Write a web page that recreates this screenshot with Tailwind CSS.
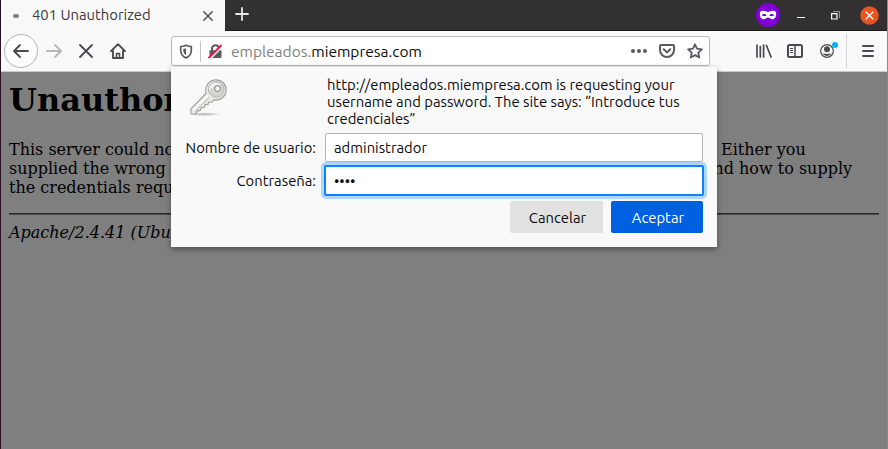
<!DOCTYPE html>
<html lang="es">
<head>
<meta charset="utf-8">
<title>401 Unauthorized</title>
<script src="https://cdn.jsdelivr.net/npm/@tailwindcss/browser@4"></script>
</head>
<body class="relative flex h-[449px] w-[888px] flex-col overflow-hidden border-l border-[#2c0f22] bg-[#7f7f7f] font-['Ubuntu','Noto_Sans',sans-serif] text-[14.8px] text-[#0c0c0d]">
  <!-- Tab strip -->
  <header class="flex h-[31px] w-[886px] shrink-0 bg-[#323031]">
    <div class="flex w-[224px] items-center bg-[#f9f9fa] pl-3">
      <span class="h-[4px] w-[6px] rounded-full bg-[#858585]"></span>
      <span class="ml-[13px] w-[119px] whitespace-nowrap text-[#38383d]">401 Unauthorized</span>
      <svg class="ml-[51px]" width="12" height="12" viewBox="0 0 12 12" fill="none" stroke="#555" stroke-width="1.6" stroke-linecap="round"><path d="M1.8 1.8l8.4 8.4M10.2 1.8L1.8 10.2"/></svg>
    </div>
    <div class="flex flex-1 items-center justify-between border-b border-[#1d1b1c] pl-[10px] pr-[8px]">
      <svg class="relative -top-px" width="14" height="14" viewBox="0 0 14 14" fill="none" stroke="#e6e6e6" stroke-width="1.8" stroke-linecap="round"><path d="M7 1v12M1 7h12"/></svg>
      <div class="flex items-center">
        <svg width="24" height="24" viewBox="0 0 24 24"><circle cx="12" cy="12" r="12" fill="#8000d7"/><path fill="#fff" fill-rule="evenodd" d="M7.500 7.800C9.800 7.800 10.500 9 12 9S14.200 7.800 16.500 7.800C19 7.600 20.200 8.500 20.200 10.800C20.200 14 18.800 16.300 16.500 16.300C14.200 16.300 13.500 14.600 12 14.600S9.800 16.300 7.500 16.300C5.200 16.300 3.800 14 3.800 10.800C3.800 8.500 5 7.600 7.500 7.800ZM8.300 10.900C7 10.900 6.200 11.600 5.900 12.200C6.600 12.900 7.500 13.100 8.500 13.100S10.400 12.900 10.600 12.500C10.400 11.500 9.600 10.900 8.300 10.900ZM15.700 10.900C14.400 10.900 13.600 11.500 13.400 12.500C13.600 12.900 14.500 13.100 15.500 13.100S17.400 12.900 18.100 12.200C17.800 11.600 17 10.900 15.700 10.900Z"/></svg>
        <svg class="ml-[17px]" width="8" height="14" viewBox="0 0 8 14"><path d="M0 9.500h8" stroke="#fff"/></svg>
        <svg class="ml-[26px]" width="9" height="9" viewBox="0 0 9 9" fill="none"><path d="M2 .5h6.500v6.500" stroke="#999"/><path d="M.6 2.600h5.400v5.400h-5.400z" stroke="#fff" stroke-width="1.200"/></svg>
        <svg class="ml-[20px]" width="19" height="19" viewBox="0 0 19 19"><circle cx="9.500" cy="9.500" r="9.300" fill="#e95420"/><path d="M5.800 5.800l7.400 7.400M13.200 5.800l-7.400 7.400" stroke="#fff" stroke-width="1.300"/></svg>
      </div>
    </div>
  </header>

  <!-- Navigation toolbar -->
  <nav class="flex h-[41px] w-[886px] shrink-0 items-center border-b border-[#ccc] bg-[#f9f9fa] pl-[3px]">
    <span class="flex size-[34px] items-center justify-center rounded-full border border-[#b4b4b5] bg-[#fdfdfd]">
      <svg width="18" height="16" viewBox="0 0 18 16" fill="none" stroke="#4a4a4e" stroke-width="1.800" stroke-linecap="round" stroke-linejoin="round"><path d="M16 8H2M8 2L2 8l6 6"/></svg>
    </span>
    <svg class="ml-[7px]" width="18" height="16" viewBox="0 0 18 16" fill="none" stroke="#b8b8b9" stroke-width="1.800" stroke-linecap="round" stroke-linejoin="round"><path d="M2 8h14M10 2l6 6-6 6"/></svg>
    <svg class="ml-[15px]" width="16" height="16" viewBox="0 0 16 16" fill="none" stroke="#4a4a4e" stroke-width="1.800" stroke-linecap="round"><path d="M2 2l12 12M14 2L2 14"/></svg>
    <svg class="ml-[16px]" width="16" height="16" viewBox="0 0 16 16" fill="none" stroke="#4a4a4e" stroke-width="1.900" stroke-linecap="round" stroke-linejoin="round"><path d="M1 8.200L8 1.200l7 7M3 8v7h10V8"/><path d="M6.500 15v-4.500h3V15" stroke-width="1.600"/></svg>

    <div class="ml-[45px] flex h-[30px] w-[539px] items-center rounded-[3px] border border-[#b9b9ba] bg-white pl-[7px] pr-[6px] shadow-[0_1px_2px_rgba(0,0,0,0.06)]">
      <svg width="14" height="15" viewBox="0 0 14 15"><path d="M7 1.200C5 2.200 3.300 2.500 1.700 2.500v3.700c0 3.600 1.800 6.300 5.300 7.700c3.500-1.400 5.300-4.100 5.300-7.700V2.500C10.700 2.500 9 2.200 7 1.200Z" fill="none" stroke="#5a5a5d" stroke-width="1.700" stroke-linejoin="round"/><path d="M7 4.200v7C5 10 4.300 8.300 4.300 6.200V4.800C5.300 4.800 6.200 4.600 7 4.200Z" fill="#5a5a5d"/></svg>
      <span class="ml-[7px] h-[21px] w-px bg-[#c4c4c5]"></span>
      <svg class="ml-[7px]" width="15" height="15" viewBox="0 0 15 15"><path d="M4 7V4.700a3.500 3.500 0 0 1 7 0V7" fill="none" stroke="#5a5a5d" stroke-width="2"/><rect x="1.500" y="6.300" width="12" height="7.700" rx="1" fill="#5a5a5d"/><path d="M1.600 15L14.600 2" stroke="#fff" stroke-width="2.200"/><path d="M.6 14L13.600 1" stroke="#ff0f45" stroke-width="1.900"/></svg>
      <span class="relative top-px ml-[8px] flex-1 whitespace-nowrap text-[15.5px] text-[#808080]">empleados.<span class="text-[#0c0c0d]">miempresa.com</span></span>
      <svg width="16" height="4" viewBox="0 0 16 4" fill="#5a5a5d"><circle cx="2" cy="2" r="2"/><circle cx="8" cy="2" r="2"/><circle cx="14" cy="2" r="2"/></svg>
      <svg class="ml-[12px]" width="16" height="14" viewBox="0 0 16 14" fill="none" stroke="#5a5a5d" stroke-width="2" stroke-linecap="round" stroke-linejoin="round"><path d="M2 1h12a1 1 0 0 1 1 1v4a7 7 0 0 1-14 0V2a1 1 0 0 1 1-1ZM4.700 5.200L8 8.400l3.300-3.200"/></svg>
      <svg class="ml-[12px]" width="16" height="16" viewBox="0 0 16 16" fill="none" stroke="#5a5a5d" stroke-width="1.800" stroke-linejoin="round"><path d="M8 1.300l2 4.400 4.900.6-3.600 3.300.9 4.900L8 12.100l-4.200 2.400.9-4.900L1.100 6.300 6 5.700Z"/></svg>
    </div>

    <svg class="ml-[46px]" width="16" height="14" viewBox="0 0 16 14" fill="none" stroke="#4a4a4e" stroke-width="1.700" stroke-linecap="round"><path d="M1 1v12M4.300 2.500V13M7.600 1v12M10.500 1.500L15 13"/></svg>
    <svg class="ml-[15px]" width="16" height="14" viewBox="0 0 16 14" fill="none" stroke="#4a4a4e"><rect x="1" y="1" width="14" height="12" rx="1.500" stroke-width="2"/><path d="M8 1v12" stroke-width="1.500"/><path d="M3 4.500h3M3 6.500h3M3 8.500h3"/></svg>
    <svg class="ml-[17px]" width="19" height="18" viewBox="0 0 19 18"><circle cx="7" cy="9" r="6.300" fill="none" stroke="#4a4a4e" stroke-width="1.200"/><circle cx="7" cy="7.200" r="3" fill="#4a4a4e"/><path d="M2.800 11.600c1.300-.3 2.500.3 4.200.3s2.900-.6 4.200-.3C10.200 13.200 8.700 14 7 14s-3.200-.8-4.200-2.400Z" fill="#4a4a4e"/><circle cx="15" cy="3" r="3" fill="#00b3f4"/></svg>
    <span class="ml-[7px] h-[34px] w-px bg-[#d7d7db]"></span>
    <svg class="ml-[15px]" width="12" height="12" viewBox="0 0 12 12" stroke="#4a4a4e" stroke-width="2" stroke-linecap="round"><path d="M1 1h10M1 6h10M1 11h10"/></svg>
  </nav>

  <!-- Dimmed page -->
  <main class="w-[886px] flex-1 pl-[8px] pr-[8px] font-['DejaVu_Serif',serif] text-[16px] leading-[19px] text-black">
    <h1 class="pt-[9px] text-[32px] font-bold leading-[38px]">Unauthorized</h1>
    <p class="mt-[21px]">This server could not verify that you are authorized to access the document requested. Either you supplied the wrong credentials (e.g., bad password), or your browser doesn't understand how to supply the credentials required.</p>
    <div class="mt-[16px] h-[2px] border-t border-b border-t-[#2a2a2a] border-b-[#4a4a4a]"></div>
    <address class="mt-[8px]">Apache/2.4.41 (Ubuntu) Server at empleados.miempresa.com Port 80</address>
  </main>
  <div class="absolute right-0 top-0 h-full w-px bg-[#8c8b8b]"></div>

  <!-- Authentication prompt -->
  <section class="absolute left-[170px] top-[67px] flex h-[180px] w-[546px] flex-col bg-[#f9f9fa] pl-[14px] pr-[14px] pt-[9px] shadow-[0_2px_6px_rgba(0,0,0,0.4)]">
    <div class="flex h-[57px]">
      <svg class="ml-[3px] mt-[2px]" width="42" height="40" viewBox="0 0 44 42">
        <defs><linearGradient id="metal" x1="0" y1="0" x2="1" y2="1"><stop offset="0" stop-color="#f8f8f6"/><stop offset="1" stop-color="#d9dad5"/></linearGradient><radialGradient id="shade"><stop offset="0" stop-color="#777" stop-opacity=".6"/><stop offset="1" stop-color="#777" stop-opacity="0"/></radialGradient></defs>
        <ellipse cx="17" cy="38" rx="17" ry="2" fill="url(#shade)"/>
        <path d="M19 16L3 32.500V37.500L8 38L10 34.500L13 34L14 31L17 31L18 28L21 28L21.500 25.500L25 25.500L27 23C34 24.500 40 19 40 12.500C40 6.500 35.500 2 29.500 2C22 2 17 9 19 16Z" fill="url(#metal)" stroke="#a0a19c" stroke-width="1.200" stroke-linejoin="round"/>
        <circle cx="29.500" cy="12" r="8.200" fill="#d3d4cf" stroke="#b0b1ac"/>
        <path d="M22 13c0-5 3-8 7-8 3 0 5 1 6 3-5-1-9 1-13 5Z" fill="#f1f1ee"/>
        <circle cx="31" cy="11" r="3" fill="#f7f7f7" stroke="#999a95" stroke-width="1.300"/>
        <path d="M21 18L5.500 34" stroke="#fff" stroke-width="1.500"/><path d="M22.500 20L7 35.500" stroke="#b5b6b1"/>
        <path d="M20 18l5 5 2-2-5-5Z" fill="#e9e9e5"/>
      </svg>
      <p class="ml-[97px] whitespace-nowrap text-[14.820px] leading-[17px]">http://empleados.miempresa.com is requesting your<br>username and password. The site says: “Introduce tus<br>credenciales”</p>
    </div>
    <div class="flex items-center">
      <label class="flex w-[131px] justify-end whitespace-nowrap pt-px">Nombre de usuario:</label>
      <div class="ml-[9px] flex h-[29px] w-[378px] items-center rounded-[2px] border border-[#b3b3b3] bg-white pl-[8px] pt-px">administrador</div>
    </div>
    <div class="mt-[3px] flex items-center">
      <label class="flex w-[131px] justify-end whitespace-nowrap pt-px">Contraseña:</label>
      <div class="-mr-px ml-[8px] flex h-[31px] w-[380px] shrink-0 items-center rounded-[2px] border-2 border-[#0a84ff] bg-white pl-[8px] pt-px shadow-[0_0_0_3px_#aed5fb]">••••</div>
    </div>
    <div class="mt-[5px] flex justify-end gap-[8px]">
      <div class="flex h-[32px] w-[93px] items-center justify-center rounded-[2px] bg-[#e1e1e1] pl-[2px] pt-[3px]">Cancelar</div>
      <div class="flex h-[32px] w-[92px] items-center justify-center rounded-[2px] bg-[#0060df] pl-[2px] pt-[3px] text-white">Aceptar</div>
    </div>
  </section>
</body>
</html>
